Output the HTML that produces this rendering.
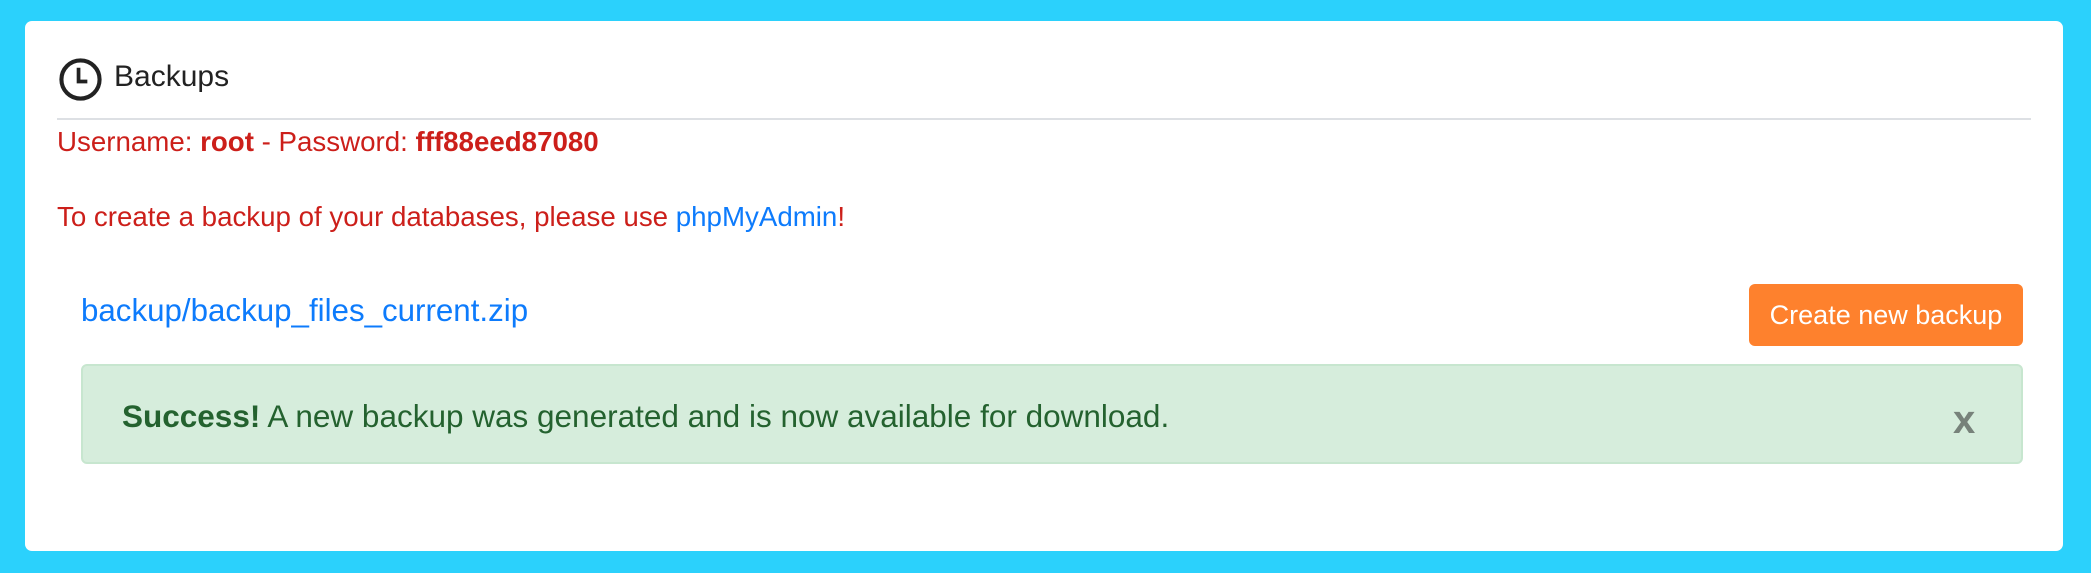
<!DOCTYPE html>
<html><head><meta charset="utf-8"><style>
*{margin:0;padding:0;box-sizing:border-box}
html,body{width:2091px;height:573px;overflow:hidden;background:#2bd1fc;font-family:"Liberation Sans",sans-serif}
.card{position:absolute;left:25px;top:21px;width:2038px;height:530px;background:#fff;border-radius:7px}
.t{position:absolute;white-space:nowrap}
.red{color:#cc1f1a}
</style></head><body>
<div class="card"></div>
<svg style="position:absolute;left:58px;top:57px" width="45" height="45" viewBox="0 0 46 46"><circle cx="23" cy="23" r="19.5" fill="none" stroke="#222" stroke-width="4.2"/><path d="M21 11v14h9" fill="none" stroke="#222" stroke-width="3.8"/></svg>
<div class="t" style="left:114px;top:57px;font-size:30px;color:#222;line-height:40px">Backups</div>
<div style="position:absolute;left:57px;top:118px;width:1974px;height:2px;background:#dde0e4"></div>
<div class="t red" style="left:57px;top:125px;font-size:27.7px;line-height:34px">Username: <b>root</b> - Password: <b>fff88eed87080</b></div>
<div class="t red" style="left:57px;top:200px;font-size:27.7px;line-height:34px">To create a backup of your databases, please use <span style="color:#0d7bfc">phpMyAdmin</span>!</div>
<div class="t" style="left:81px;top:292px;font-size:31.3px;line-height:38px;color:#0d7bfc">backup/backup_files_current.zip</div>
<div class="t" style="left:1749px;top:284px;width:274px;height:62px;background:#fe812d;border-radius:6px;color:#fff;font-size:27px;line-height:62px;text-align:center">Create new backup</div>
<div style="position:absolute;left:81px;top:364px;width:1942px;height:100px;background:#d6eddc;border:2px solid #c7e6cf;border-radius:6px"></div>
<div class="t" style="left:122px;top:396px;font-size:31.5px;line-height:40px;color:#24622f"><b>Success!</b> A new backup was generated and is now available for download.</div>
<div class="t" style="left:1953px;top:398px;font-size:40px;font-weight:bold;line-height:44px;color:#77827a">x</div>
</body></html>
